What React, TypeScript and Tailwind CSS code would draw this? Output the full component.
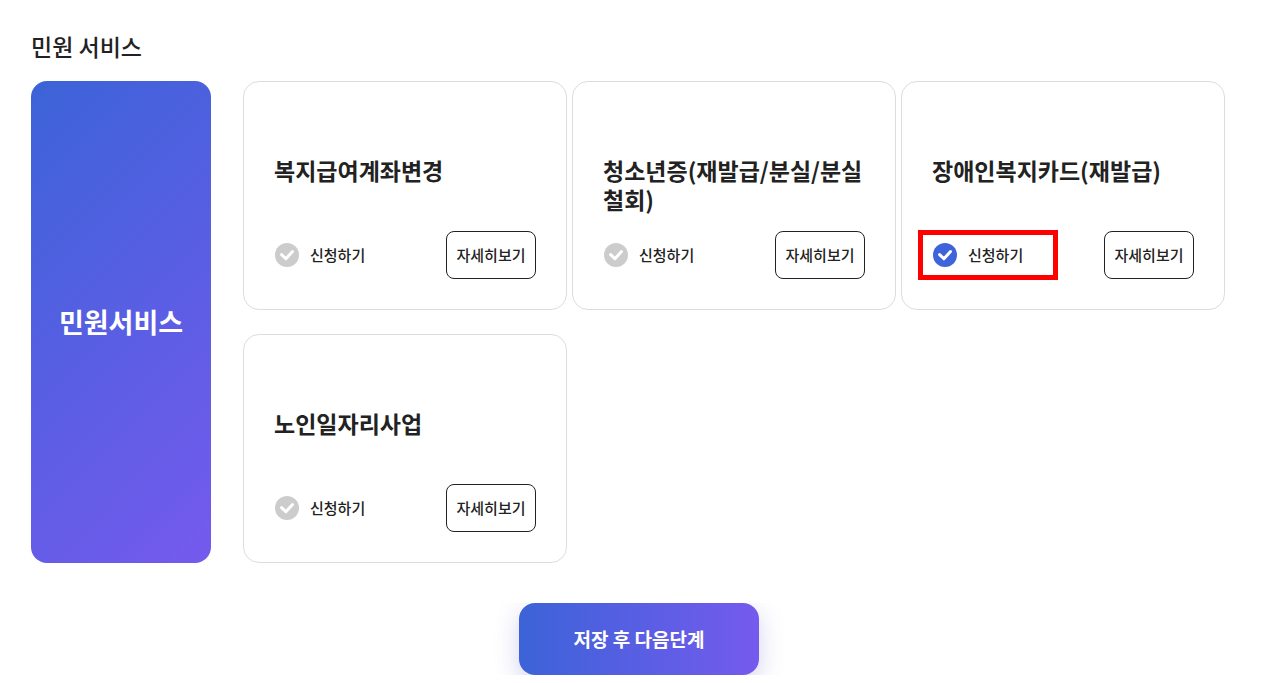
import { useState } from 'react';

type Service = {
  id: string;
  title: string;
  highlighted?: boolean;
};

const services: Service[] = [
  { id: 'account', title: '복지급여계좌변경' },
  { id: 'youth', title: '청소년증(재발급/분실/분실철회)' },
  { id: 'disability', title: '장애인복지카드(재발급)', highlighted: true },
  { id: 'senior', title: '노인일자리사업' },
];

type CardProps = {
  service: Service;
  checked: boolean;
  onToggle: () => void;
};

function ServiceCard({ service, checked, onToggle }: CardProps) {
  return (
    <li className="rounded-2xl border border-[#dddddd] bg-white px-[30px] pt-[74px] pb-[30px]">
      <h3 className="min-h-[59px] text-[23px] leading-[29px] font-bold break-all">{service.title}</h3>
      <div className="mt-4 flex items-center justify-between">
        <label
          htmlFor={service.id}
          className="relative flex h-12 cursor-pointer items-center gap-[11px] pl-px text-[15px] font-medium"
        >
          <span className="grid size-6">
            <input
              id={service.id}
              type="checkbox"
              checked={checked}
              onChange={onToggle}
              className="col-start-1 row-start-1 size-6 cursor-pointer appearance-none rounded-full bg-[#cccccc] checked:bg-[#3f63da]"
            />
            <svg viewBox="0 0 24 24" className="pointer-events-none col-start-1 row-start-1 size-6" aria-hidden="true">
              <path
                d="M6.6 11.6l4.3 4.2 6.6-7.2"
                fill="none"
                stroke="#fff"
                strokeWidth="3"
                strokeLinecap="round"
                strokeLinejoin="round"
              />
            </svg>
          </span>
          신청하기
          {service.highlighted && (
            <span className="pointer-events-none absolute -inset-y-px -left-3.5 w-[140px] border-5 border-[#ff0000]" />
          )}
        </label>
        <button
          type="button"
          className="h-12 w-[90px] cursor-pointer rounded-lg border border-[#222222] text-[15px] font-medium whitespace-nowrap"
        >
          자세히보기
        </button>
      </div>
    </li>
  );
}

export default function App() {
  const [selected, setSelected] = useState<string[]>(['disability']);

  const toggle = (id: string) => {
    setSelected((prev) => (prev.includes(id) ? prev.filter((s) => s !== id) : [...prev, id]));
  };

  return (
    <main className="bg-white pt-[31px] pr-[21px] pb-2 pl-[31px] font-['Noto_Sans_CJK_KR',sans-serif] text-[#222222]">
      <h1 className="text-[23px] leading-[30px] font-medium">민원 서비스</h1>

      <section className="mt-5 flex gap-8 pr-[22px]">
        <div className="flex w-[180px] shrink-0 items-center justify-center rounded-2xl bg-linear-[135deg,#3c63d8,#755aee]">
          <h2 className="text-[27px] font-bold text-white">민원서비스</h2>
        </div>
        <ul className="grid flex-1 grid-cols-3 gap-x-[5px] gap-y-6">
          {services.map((service) => (
            <ServiceCard
              key={service.id}
              service={service}
              checked={selected.includes(service.id)}
              onToggle={() => toggle(service.id)}
            />
          ))}
        </ul>
      </section>

      <div className="mt-10 flex justify-center overflow-hidden">
        <button
          type="button"
          className="h-[72px] w-60 cursor-pointer rounded-2xl bg-linear-[90deg,#3c63d8,#755aee] text-[19px] font-bold text-white shadow-[0_8px_24px_rgba(80,80,200,0.25)]"
        >
          저장 후 다음단계
        </button>
      </div>
    </main>
  );
}
